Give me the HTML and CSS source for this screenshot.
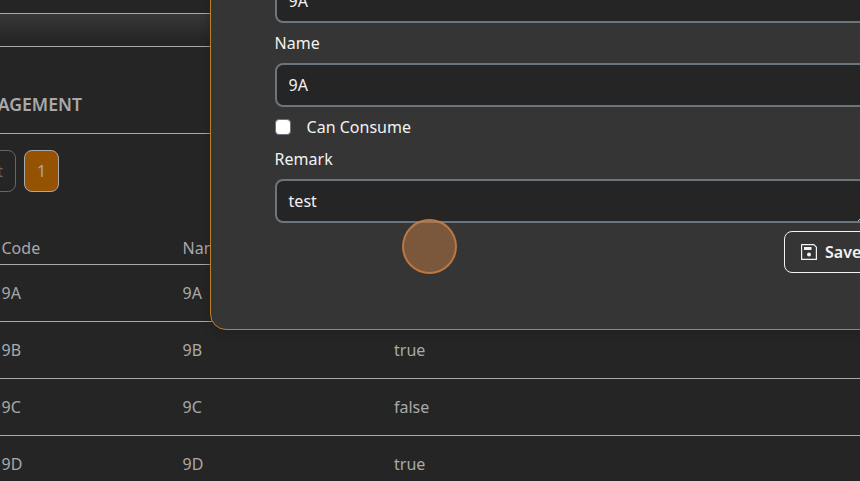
FILE: index.html
```html
<!DOCTYPE html>
<html lang="en">
<head>
<meta charset="utf-8">
<title>Management</title>
<link rel="stylesheet" href="styles.css">
</head>
<body>
<main class="page">
  <div class="topbar"></div>
  <header class="heading"><h1>MANAGEMENT</h1></header>
  <nav class="pager">
    <button class="page-btn first" disabled>First</button>
    <button class="page-btn current">1</button>
  </nav>
  <div class="table">
    <div class="row head"><span>Code</span><span>Name</span><span></span></div>
    <div class="row"><span>9A</span><span>9A</span><span></span></div>
    <div class="row"><span>9B</span><span>9B</span><span>true</span></div>
    <div class="row"><span>9C</span><span>9C</span><span>false</span></div>
    <div class="row"><span>9D</span><span>9D</span><span>true</span></div>
  </div>
</main>
<form class="modal">
  <input class="field" type="text" value="9A">
  <label>Name</label>
  <input class="field" type="text" value="9A">
  <div class="check"><span class="box"></span><label>Can Consume</label></div>
  <label>Remark</label>
  <div class="field remark">test
    <svg class="grip" width="8" height="8" viewBox="0 0 8 8"><path d="M0 8 8 0M4 8 8 4" stroke="#ddd" stroke-width=".8"/></svg>
  </div>
  <div class="actions">
    <button class="save" type="button">
      <svg width="16" height="16" viewBox="0 0 16 16"><path d="M.6.6H12.8L15.4 3.2V15.4H.6Z" fill="none" stroke="currentColor" stroke-width="1.2" stroke-linejoin="round"/><path d="M3 3H10.5V6H3Z" fill="currentColor"/><circle cx="8" cy="10.5" r="2" fill="currentColor"/></svg>
      <span>Save</span>
    </button>
  </div>
</form>
<div class="pointer"></div>
</body>
</html>
```
FILE: styles.css
```css
* { box-sizing: border-box; }
body {
  margin: 0;
  width: 860px;
  height: 481px;
  overflow: hidden;
  position: relative;
  background: #252525;
  color: #a9a9a9;
  font: 16px/24px "Noto Sans", sans-serif;
}
button, input { font: inherit; color: inherit; }
.page { padding-top: 13px; }
.topbar {
  height: 34px;
  border-top: 1px solid #a9a9a9;
  border-bottom: 1px solid #a9a9a9;
  background: linear-gradient(#373737, #252525 85%);
}
.heading {
  height: 87px;
  padding-top: 43px;
  border-bottom: 1px solid #a9a9a9;
}
h1 {
  margin: 0;
  width: 82px;
  display: flex;
  justify-content: flex-end;
  font-size: 17.6px;
  line-height: 28px;
  font-weight: 600;
}
.pager { display: flex; gap: 8px; padding-top: 16px; margin-left: -51px; }
.page-btn {
  height: 42px;
  padding: 0 12px;
  border: 1px solid #a9a9a9;
  border-radius: 8px;
  background: transparent;
}
.first { width: 67px; text-align: right; color: #666; border-color: #666; }
.current { width: 35px; background: #965203; }
.table { padding-top: 32px; }
.row {
  display: grid;
  grid-template-columns: 181px 211.5px 1fr;
  height: 57px;
  padding-left: 1.5px;
  align-items: center;
  border-bottom: 1px solid #a9a9a9;
}
.head { height: 41px; padding-top: 8px; }
.modal {
  position: absolute;
  left: 210px;
  top: -86px;
  width: 760px;
  height: 416px;
  padding: 64px;
  display: flex;
  flex-direction: column;
  gap: 8px;
  border: 1px solid #bc802c;
  border-radius: 16px;
  background: #353535;
  color: #f2f2f2;
  box-shadow: 0 2px 8px #1a1a1a80;
}
.modal label { margin-left: -.4px; }
.field {
  flex: none;
  width: 100%;
  height: 44px;
  padding: 8px 11.6px;
  border: 2px solid #6c747e;
  border-radius: 8px;
  background: #252525;
}
.check { display: flex; align-items: center; height: 24px; gap: 16px; }
.box {
  width: 16px;
  height: 16px;
  border: 1px solid #6b7280;
  border-radius: 4px;
  background: #fff;
}
.remark { position: relative; width: 595px; }
.grip { position: absolute; right: 2px; bottom: 0; }
.actions { display: flex; padding-left: 509px; }
.save {
  display: flex;
  align-items: center;
  gap: 8px;
  height: 42px;
  padding: 0 16px;
  border: 1px solid #f2f2f2;
  border-radius: 8px;
  background: transparent;
  font-weight: 600;
}
.pointer {
  position: absolute;
  left: 402px;
  top: 219px;
  width: 55px;
  height: 55px;
  border: 2.5px solid rgb(206 128 68 / .8);
  border-radius: 50%;
  background: #c17b4180;
}
```
